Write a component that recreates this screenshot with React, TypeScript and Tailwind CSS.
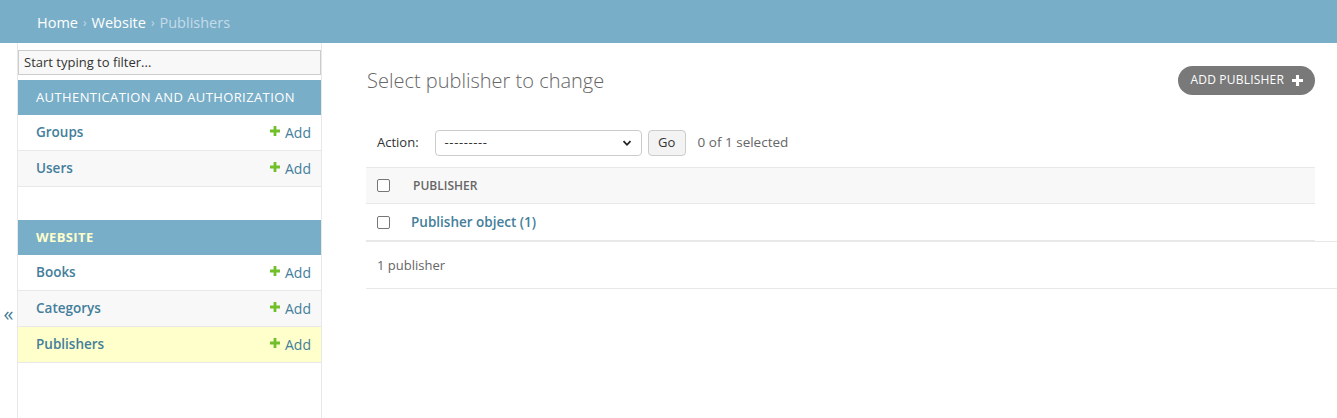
import React from 'react';

const font = { fontFamily: '"Open Sans", "Noto Sans", sans-serif' };

function Plus({ className }: { className?: string }) {
  return (
    <svg viewBox="0 0 10 10" className={className} aria-hidden>
      <path d="M3.6 0h2.8v3.6H10v2.8H6.4V10H3.6V6.4H0V3.6h3.6z" fill="currentColor" />
    </svg>
  );
}

type Model = { name: string; current?: boolean };

function Section({ title, models, current }: { title: string; models: Model[]; current?: boolean }) {
  return (
    <div>
      <div
        className={`h-[35px] bg-[#79aec8] pl-[18px] flex items-center text-[13px] uppercase tracking-[0.4px] pt-[1px] ${
          current ? 'text-[#ffc] font-bold' : 'text-white'
        }`}
      >
        {title}
      </div>
      {models.map((m, i) => (
        <div
          key={m.name}
          className={`h-[36px] flex items-center justify-between pl-[18px] pr-[10px] border-b border-[#e8e8e8] text-[14px] ${
            m.current ? 'bg-[#ffc]' : i % 2 === 1 ? 'bg-[#f8f8f8]' : 'bg-white'
          }`}
        >
          <span className="text-[#447e9b] font-semibold text-[13.5px]">{m.name}</span>
          <span className="flex items-center gap-[5px] text-[#447e9b]">
            <Plus className="w-[10px] h-[10px] text-[#70bf2b] -mt-[3px]" />
            Add
          </span>
        </div>
      ))}
    </div>
  );
}

function Checkbox() {
  return <span className="block w-[13px] h-[13px] rounded-[2px] border border-[#767676] bg-white" />;
}

export default function App() {
  return (
    <div className="w-full h-[418px] overflow-hidden bg-white text-[#333]" style={font}>
      <div className="h-[43px] bg-[#79aec8] px-[37px] pt-[2px] flex items-center text-[14.5px] text-[#c4dce8]">
        <span className="text-white">Home</span>
        <span className="mx-[5px] text-[12px]">›</span>
        <span className="text-white">Website</span>
        <span className="mx-[5px] text-[12px]">›</span>
        <span>Publishers</span>
      </div>

      <div className="flex h-[375px]">
        <div className="w-[18px] shrink-0 border-r border-[#e8e8e8] flex justify-center pt-[261px] text-[20px] text-[#447e9b] leading-none">
          «
        </div>

        <nav className="w-[304px] shrink-0 border-r border-[#e8e8e8] pt-[6px]">
          <input
            readOnly
            placeholder="Start typing to filter..."
            className="w-full h-[25px] bg-[#f8f8f8] border border-[#ccc] px-[5px] text-[13px] placeholder:text-[#333] outline-none mb-[5px]"
          />
          <Section
            title="Authentication and Authorization"
            models={[{ name: 'Groups' }, { name: 'Users' }]}
          />
          <div className="h-[33px]" />
          <Section
            title="Website"
            current
            models={[{ name: 'Books' }, { name: 'Categorys' }, { name: 'Publishers', current: true }]}
          />
        </nav>

        <main className="flex-1 pl-[44px] pt-[22px]">
          <div className="flex items-center justify-between pr-[22px] h-[29px]">
            <h1 className="text-[20px] font-light text-[#666] pl-[1px] mt-[3px]">Select publisher to change</h1>
            <a className="h-[29px] mt-[1px] px-[12px] rounded-full bg-[#797979] text-white text-[12px] tracking-[0.2px] flex items-center gap-[8px]">
              ADD PUBLISHER
              <Plus className="w-[11px] h-[11px]" />
            </a>
          </div>

          <div className="mt-[36px] mr-[22px] pl-[11px] flex items-center h-[26px] text-[13px] text-[#333]">
            <span className="mr-[16px]">Action:</span>
            <div className="w-[207px] h-[26px] border border-[#ccc] rounded-[4px] flex items-center justify-between px-[9px] bg-white">
              <span className="text-[13px] tracking-[0.6px]">---------</span>
              <svg viewBox="0 0 10 10" className="w-[10px] h-[10px]">
                <path d="M1.5 3.2 5 6.8 8.5 3.2" fill="none" stroke="#222" strokeWidth="1.8" />
              </svg>
            </div>
            <button className="ml-[6px] w-[38px] h-[26px] border border-[#ccc] rounded-[4px] bg-[#f3f3f3] text-[13px]">
              Go
            </button>
            <span className="ml-[12px] text-[#666] -mt-[1px] text-[13.5px]">0 of 1 selected</span>
          </div>

          <div className="mt-[11px] mr-[22px]">
            <div className="h-[37px] bg-[#f8f8f8] border-t border-b border-[#e8e8e8] flex items-center pl-[11px]">
              <Checkbox />
              <span className="ml-[23px] mt-[1px] text-[12px] font-semibold text-[#666] uppercase">Publisher</span>
            </div>
            <div className="h-[37px] border-b border-[#e8e8e8] flex items-center pl-[11px]">
              <Checkbox />
              <span className="ml-[21px] text-[13.5px] font-semibold text-[#447e9b]">Publisher object (1)</span>
            </div>
          </div>
          <div className="h-[48px] border-t border-b border-[#e8e8e8] flex items-center pl-[11px] text-[13px] text-[#666] pt-[1px]">
            1 publisher
          </div>
        </main>
      </div>
    </div>
  );
}
